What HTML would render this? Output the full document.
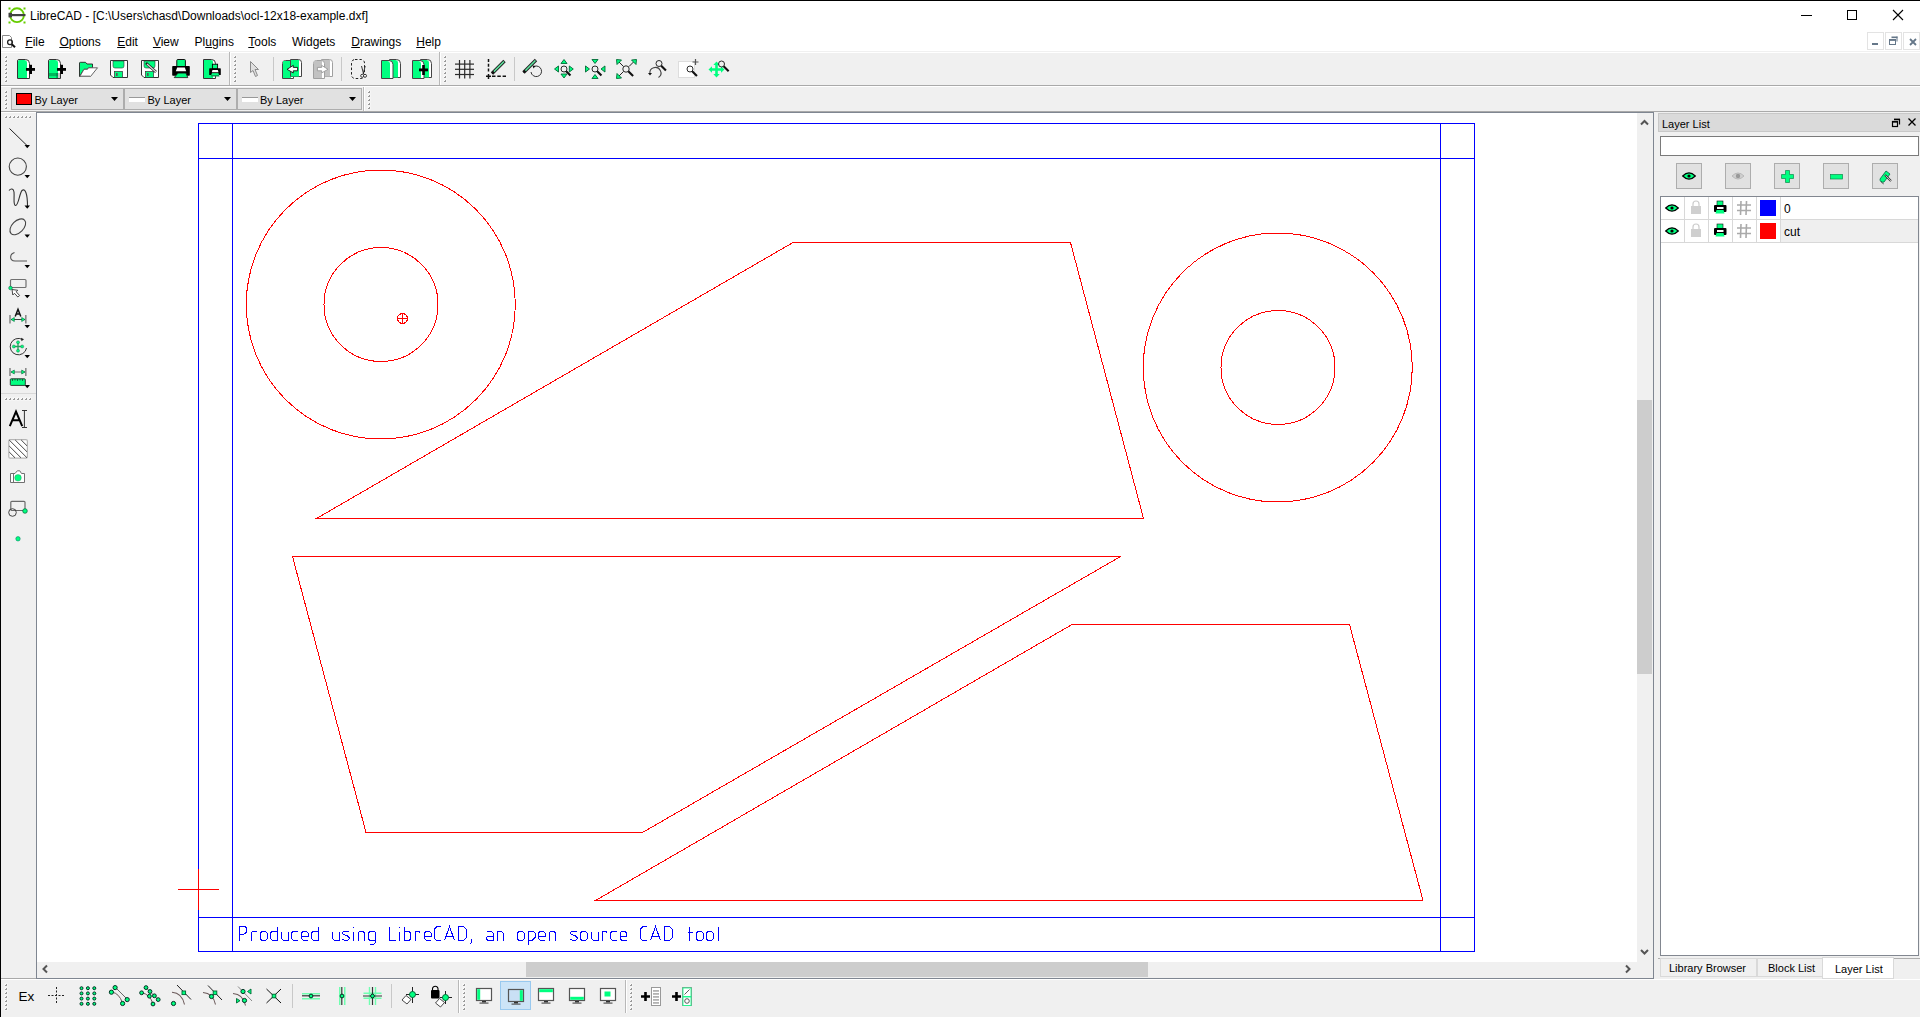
<!DOCTYPE html>
<html><head><meta charset="utf-8"><style>
html,body{margin:0;padding:0}
body{width:1920px;height:1017px;position:relative;overflow:hidden;background:#f0f0f0;font-family:"Liberation Sans",sans-serif}
.t{position:absolute;white-space:nowrap;line-height:1}
svg{overflow:visible}
</style></head><body>
<div style="position:absolute;left:0px;top:0px;width:1920px;height:53px;background:#fff"></div>
<div style="position:absolute;left:0px;top:51px;width:1920px;height:1px;background:#f0f0f0"></div>
<div style="position:absolute;left:0px;top:0px;width:1920px;height:1px;background:#000"></div>
<div style="position:absolute;left:0px;top:0px;width:1px;height:1017px;background:#000"></div>
<div style="position:absolute;left:1px;top:85px;width:1919px;height:1px;background:#a9a9a9"></div>
<div style="position:absolute;left:1px;top:86px;width:1919px;height:1px;background:#fff"></div>
<div style="position:absolute;left:1px;top:111px;width:1919px;height:1px;background:#a9a9a9"></div>
<div style="position:absolute;left:36px;top:112px;width:1618px;height:867px;background:#fff;border:1px solid #7f8691;box-sizing:border-box"></div>
<div style="position:absolute;left:1px;top:112px;width:35px;height:1px;background:#fff"></div>
<div style="position:absolute;left:1px;top:978px;width:35px;height:1px;background:#a9a9a9"></div>
<div style="position:absolute;left:1px;top:979px;width:1919px;height:1px;background:#fff"></div>
<div style="position:absolute;left:1637px;top:113px;width:16px;height:849px;background:#f0f0f0"></div>
<div style="position:absolute;left:1637px;top:400px;width:15px;height:274px;background:#cdcdcd"></div>
<div style="position:absolute;left:37px;top:962px;width:1616px;height:16px;background:#f0f0f0"></div>
<div style="position:absolute;left:526px;top:962px;width:622px;height:15px;background:#cdcdcd"></div>
<svg style="position:absolute;left:0;top:0" width="1920" height="1017"><g fill="none" stroke-width="1" shape-rendering="crispEdges"><rect x="198.5" y="123.5" width="1276" height="828" stroke="#0000ff"/><line x1="232.5" y1="123" x2="232.5" y2="952" stroke="#0000ff"/><line x1="1440.5" y1="123" x2="1440.5" y2="952" stroke="#0000ff"/><line x1="198" y1="158.5" x2="1475" y2="158.5" stroke="#0000ff"/><line x1="198" y1="917.5" x2="1475" y2="917.5" stroke="#0000ff"/><line x1="178" y1="889.5" x2="219" y2="889.5" stroke="#ff0000"/><line x1="198.5" y1="869" x2="198.5" y2="910" stroke="#ff0000"/></g><g fill="none" stroke="#0000ff" stroke-width="1" stroke-linejoin="miter" shape-rendering="crispEdges"><polyline points="239.5,940.5 239.5,926.5 245.0,926.5 246.5,928.0 246.5,932.0 245.0,933.5 242.5,934.5 239.5,934.5"/><polyline points="251.5,940.5 251.5,931.5"/><polyline points="251.5,931.5 256.0,931.5 256.5,932.5"/><polyline points="262.0,931.5 265.5,931.5 267.0,933.0 267.0,939.0 265.5,940.5 262.0,940.5 260.5,939.0 260.5,933.0 262.0,931.5"/><polyline points="277.0,926.5 277.0,940.5 272.5,940.5 270.5,938.5 270.5,933.0 272.0,931.5 277.0,931.5"/><polyline points="281.5,931.5 281.5,938.5 283.5,940.5 288.0,940.5"/><polyline points="288.0,931.5 288.0,940.5"/><polyline points="297.5,931.5 293.0,931.5 291.5,933.0 291.5,938.5 293.5,940.5 297.5,940.5"/><polyline points="301.5,936.0 308.0,936.0 308.0,933.0 306.5,931.5 303.0,931.5 301.5,933.0 301.5,938.5 303.5,940.5 308.0,940.5"/><polyline points="318.0,926.5 318.0,940.5 313.5,940.5 311.5,938.5 311.5,933.0 313.0,931.5 318.0,931.5"/><polyline points="332.5,931.5 332.5,938.5 334.5,940.5 339.0,940.5"/><polyline points="339.0,931.5 339.0,940.5"/><polyline points="349.0,931.5 343.5,931.5 342.5,932.5 343.0,934.0 348.5,936.5 349.0,937.5 349.0,939.0 347.5,940.5 344.5,940.5 342.5,939.0"/><polyline points="353.5,926.5 353.5,928.0"/><polyline points="353.5,931.5 353.5,940.5"/><polyline points="358.5,940.5 358.5,931.5"/><polyline points="358.5,931.5 363.0,931.5 364.5,933.0 364.5,940.5"/><polyline points="375.0,931.5 375.0,943.0 373.5,944.5 369.5,944.5"/><polyline points="375.0,931.5 370.0,931.5 368.5,933.0 368.5,939.0 370.0,940.5 375.0,940.5"/><polyline points="389.5,926.5 389.5,940.5 396.0,940.5"/><polyline points="399.5,926.5 399.5,928.0"/><polyline points="399.5,931.5 399.5,940.5"/><polyline points="404.5,926.5 404.5,940.5 409.0,940.5 410.5,939.0 410.5,933.0 409.0,931.5 404.5,931.5"/><polyline points="415.0,940.5 415.0,931.5"/><polyline points="415.0,931.5 419.5,931.5 420.0,932.5"/><polyline points="424.5,936.0 431.0,936.0 431.0,933.0 429.5,931.5 426.0,931.5 424.5,933.0 424.5,938.5 426.5,940.5 431.0,940.5"/><polyline points="441.0,926.5 437.0,926.5 434.5,929.0 434.5,938.5 436.5,940.5 441.0,940.5"/><polyline points="444.5,940.5 449.5,926.5 454.5,940.5"/><polyline points="446.3,936.0 452.7,936.0"/><polyline points="458.5,940.5 458.5,926.5 463.5,926.5 466.5,929.5 466.5,937.5 463.5,940.5 458.5,940.5"/><polyline points="471.5,938.5 471.5,941.5 470.5,944.0"/><polyline points="487.0,931.5 491.5,931.5 493.0,933.0 493.0,940.5"/><polyline points="493.0,936.0 488.5,936.0 486.5,937.5 486.5,939.0 488.0,940.5 493.0,940.5"/><polyline points="497.0,940.5 497.0,931.5"/><polyline points="497.0,931.5 501.5,931.5 503.0,933.0 503.0,940.5"/><polyline points="519.0,931.5 522.5,931.5 524.0,933.0 524.0,939.0 522.5,940.5 519.0,940.5 517.5,939.0 517.5,933.0 519.0,931.5"/><polyline points="528.5,945.0 528.5,931.5 533.5,931.5 535.0,933.0 535.0,937.5 532.5,940.0 528.5,940.0"/><polyline points="538.5,936.0 545.0,936.0 545.0,933.0 543.5,931.5 540.0,931.5 538.5,933.0 538.5,938.5 540.5,940.5 545.0,940.5"/><polyline points="549.5,940.5 549.5,931.5"/><polyline points="549.5,931.5 554.0,931.5 555.5,933.0 555.5,940.5"/><polyline points="577.0,931.5 571.5,931.5 570.5,932.5 571.0,934.0 576.5,936.5 577.0,937.5 577.0,939.0 575.5,940.5 572.5,940.5 570.5,939.0"/><polyline points="582.0,931.5 585.5,931.5 587.0,933.0 587.0,939.0 585.5,940.5 582.0,940.5 580.5,939.0 580.5,933.0 582.0,931.5"/><polyline points="591.5,931.5 591.5,938.5 593.5,940.5 598.0,940.5"/><polyline points="598.0,931.5 598.0,940.5"/><polyline points="602.0,940.5 602.0,931.5"/><polyline points="602.0,931.5 606.5,931.5 607.0,932.5"/><polyline points="616.5,931.5 612.0,931.5 610.5,933.0 610.5,938.5 612.5,940.5 616.5,940.5"/><polyline points="620.0,936.0 626.5,936.0 626.5,933.0 625.0,931.5 621.5,931.5 620.0,933.0 620.0,938.5 622.0,940.5 626.5,940.5"/><polyline points="647.0,926.5 643.0,926.5 640.5,929.0 640.5,938.5 642.5,940.5 647.0,940.5"/><polyline points="650.5,940.5 655.5,926.5 660.5,940.5"/><polyline points="652.3,936.0 658.7,936.0"/><polyline points="664.5,940.5 664.5,926.5 669.5,926.5 672.5,929.5 672.5,937.5 669.5,940.5 664.5,940.5"/><polyline points="689.0,926.5 689.0,940.5"/><polyline points="687.5,932.0 692.5,932.0"/><polyline points="698.0,931.5 701.5,931.5 703.0,933.0 703.0,939.0 701.5,940.5 698.0,940.5 696.5,939.0 696.5,933.0 698.0,931.5"/><polyline points="708.0,931.5 711.5,931.5 713.0,933.0 713.0,939.0 711.5,940.5 708.0,940.5 706.5,939.0 706.5,933.0 708.0,931.5"/><polyline points="718.0,926.5 718.0,940.5 719.0,940.5"/></g><g fill="none" stroke="#ff0000" stroke-width="1" shape-rendering="crispEdges"><circle cx="380.75" cy="304.5" r="134.5"/><circle cx="381" cy="304.5" r="57"/><circle cx="1277.75" cy="367.5" r="134.5"/><circle cx="1278" cy="367.5" r="57"/><circle cx="402.5" cy="318.5" r="5"/><line x1="397" y1="318.5" x2="408" y2="318.5"/><line x1="402.5" y1="313" x2="402.5" y2="324"/><polygon points="316.5,518.5 793,242.5 1070.5,242.5 1143.5,518.5"/><polygon points="292.5,556.5 1120.5,556.5 642.5,832.5 366,832.5"/><polygon points="1072,624.5 1349.5,624.5 1423,900.5 595.5,900.5"/></g></svg>
<div class="t" style="left:30px;top:9.64px;font-size:12px;color:#000;">LibreCAD - [C:\Users\chasd\Downloads\ocl-12x18-example.dxf]</div>
<svg style="position:absolute;left:8px;top:7px;" width="18" height="17" viewBox="0 0 18 17"><circle cx="9" cy="8.2" r="6.9" fill="none" stroke="#66cc00" stroke-width="1.9"/><rect x="0.5" y="0.5" width="2" height="2" fill="#66cc00"/><rect x="15.5" y="0.5" width="2" height="2" fill="#66cc00"/><rect x="0.5" y="14.5" width="2" height="2" fill="#66cc00"/><rect x="15.5" y="14.5" width="2" height="2" fill="#66cc00"/><rect x="1" y="7" width="16.5" height="2.2" fill="#404040"/><rect x="0.5" y="5.8" width="3.5" height="4.6" fill="#404040"/></svg>
<svg style="position:absolute;left:1801px;top:14px;" width="12" height="2" viewBox="0 0 12 2"><rect x="0" y="1" width="11" height="1" fill="#000"/></svg>
<svg style="position:absolute;left:1846px;top:9px;" width="12" height="12" viewBox="0 0 12 12"><rect x="1.5" y="1.5" width="9" height="9" fill="none" stroke="#000" stroke-width="1"/></svg>
<svg style="position:absolute;left:1892px;top:9px;" width="12" height="12" viewBox="0 0 12 12"><path d="M1 1 L11 11 M11 1 L1 11" stroke="#000" stroke-width="1.1" fill="none"/></svg>
<svg style="position:absolute;left:2px;top:35px;" width="15" height="13" viewBox="0 0 15 13"><path d="M0.5 0.5 L7.5 0.5 L9.5 2.5 L9.5 12.5 L0.5 12.5 Z" fill="#fff" stroke="#8a8a8a" stroke-width="1"/><circle cx="8" cy="7.3" r="2.4" fill="none" stroke="#222" stroke-width="1.3"/><path d="M9.8 9.2 L13 12.3" stroke="#111" stroke-width="2"/></svg>
<div class="t" style="left:25.3px;top:35.64px;font-size:12px;color:#000;text-decoration-skip-ink:none"><u>F</u>ile</div>
<div class="t" style="left:59.4px;top:35.64px;font-size:12px;color:#000;text-decoration-skip-ink:none"><u>O</u>ptions</div>
<div class="t" style="left:117.2px;top:35.64px;font-size:12px;color:#000;text-decoration-skip-ink:none"><u>E</u>dit</div>
<div class="t" style="left:152.9px;top:35.64px;font-size:12px;color:#000;text-decoration-skip-ink:none"><u>V</u>iew</div>
<div class="t" style="left:194.6px;top:35.64px;font-size:12px;color:#000;text-decoration-skip-ink:none">Pl<u>u</u>gins</div>
<div class="t" style="left:248.3px;top:35.64px;font-size:12px;color:#000;text-decoration-skip-ink:none"><u>T</u>ools</div>
<div class="t" style="left:292px;top:35.64px;font-size:12px;color:#000;text-decoration-skip-ink:none">Widgets</div>
<div class="t" style="left:351.25px;top:35.64px;font-size:12px;color:#000;text-decoration-skip-ink:none"><u>D</u>rawings</div>
<div class="t" style="left:416.25px;top:35.64px;font-size:12px;color:#000;text-decoration-skip-ink:none"><u>H</u>elp</div>
<div style="position:absolute;left:1867px;top:32px;width:17px;height:18px;border:1px solid #e3e3e3;box-sizing:border-box;background:#fff"></div>
<div style="position:absolute;left:1885px;top:32px;width:17px;height:18px;border:1px solid #e3e3e3;box-sizing:border-box;background:#fff"></div>
<div style="position:absolute;left:1903px;top:32px;width:17px;height:18px;border:1px solid #e3e3e3;box-sizing:border-box;background:#fff"></div>
<svg style="position:absolute;left:1872px;top:43px;" width="7" height="3" viewBox="0 0 7 3"><rect x="0" y="0" width="6" height="2" fill="#657789"/></svg>
<svg style="position:absolute;left:1889px;top:36px;" width="10" height="10" viewBox="0 0 10 10"><rect x="2.5" y="0.5" width="6" height="1.6" fill="#657789"/><rect x="7.5" y="0.5" width="1" height="5" fill="#657789"/><rect x="0.5" y="3.5" width="6" height="5" fill="none" stroke="#657789" stroke-width="1"/><rect x="0.5" y="3.3" width="6" height="1.6" fill="#657789"/></svg>
<svg style="position:absolute;left:1909px;top:38px;" width="8" height="8" viewBox="0 0 8 8"><path d="M1 1 L7 7 M7 1 L1 7" stroke="#657789" stroke-width="1.8" fill="none"/></svg>
<svg style="position:absolute;left:0;top:0" width="1920" height="1017"><rect x="4.5" y="55.5" width="3" height="3" fill="#fbfbfb"/><rect x="6" y="56.0" width="1" height="1" fill="#9a9a9a"/><rect x="5" y="57.0" width="2" height="1" fill="#9a9a9a"/><rect x="4.5" y="59.5" width="3" height="3" fill="#fbfbfb"/><rect x="6" y="60.0" width="1" height="1" fill="#9a9a9a"/><rect x="5" y="61.0" width="2" height="1" fill="#9a9a9a"/><rect x="4.5" y="63.5" width="3" height="3" fill="#fbfbfb"/><rect x="6" y="64.0" width="1" height="1" fill="#9a9a9a"/><rect x="5" y="65.0" width="2" height="1" fill="#9a9a9a"/><rect x="4.5" y="67.5" width="3" height="3" fill="#fbfbfb"/><rect x="6" y="68.0" width="1" height="1" fill="#9a9a9a"/><rect x="5" y="69.0" width="2" height="1" fill="#9a9a9a"/><rect x="4.5" y="71.5" width="3" height="3" fill="#fbfbfb"/><rect x="6" y="72.0" width="1" height="1" fill="#9a9a9a"/><rect x="5" y="73.0" width="2" height="1" fill="#9a9a9a"/><rect x="4.5" y="75.5" width="3" height="3" fill="#fbfbfb"/><rect x="6" y="76.0" width="1" height="1" fill="#9a9a9a"/><rect x="5" y="77.0" width="2" height="1" fill="#9a9a9a"/><rect x="4.5" y="79.5" width="3" height="3" fill="#fbfbfb"/><rect x="6" y="80.0" width="1" height="1" fill="#9a9a9a"/><rect x="5" y="81.0" width="2" height="1" fill="#9a9a9a"/><rect x="233.5" y="55.5" width="3" height="3" fill="#fbfbfb"/><rect x="235" y="56.0" width="1" height="1" fill="#9a9a9a"/><rect x="234" y="57.0" width="2" height="1" fill="#9a9a9a"/><rect x="233.5" y="59.5" width="3" height="3" fill="#fbfbfb"/><rect x="235" y="60.0" width="1" height="1" fill="#9a9a9a"/><rect x="234" y="61.0" width="2" height="1" fill="#9a9a9a"/><rect x="233.5" y="63.5" width="3" height="3" fill="#fbfbfb"/><rect x="235" y="64.0" width="1" height="1" fill="#9a9a9a"/><rect x="234" y="65.0" width="2" height="1" fill="#9a9a9a"/><rect x="233.5" y="67.5" width="3" height="3" fill="#fbfbfb"/><rect x="235" y="68.0" width="1" height="1" fill="#9a9a9a"/><rect x="234" y="69.0" width="2" height="1" fill="#9a9a9a"/><rect x="233.5" y="71.5" width="3" height="3" fill="#fbfbfb"/><rect x="235" y="72.0" width="1" height="1" fill="#9a9a9a"/><rect x="234" y="73.0" width="2" height="1" fill="#9a9a9a"/><rect x="233.5" y="75.5" width="3" height="3" fill="#fbfbfb"/><rect x="235" y="76.0" width="1" height="1" fill="#9a9a9a"/><rect x="234" y="77.0" width="2" height="1" fill="#9a9a9a"/><rect x="233.5" y="79.5" width="3" height="3" fill="#fbfbfb"/><rect x="235" y="80.0" width="1" height="1" fill="#9a9a9a"/><rect x="234" y="81.0" width="2" height="1" fill="#9a9a9a"/><rect x="443.5" y="55.5" width="3" height="3" fill="#fbfbfb"/><rect x="445" y="56.0" width="1" height="1" fill="#9a9a9a"/><rect x="444" y="57.0" width="2" height="1" fill="#9a9a9a"/><rect x="443.5" y="59.5" width="3" height="3" fill="#fbfbfb"/><rect x="445" y="60.0" width="1" height="1" fill="#9a9a9a"/><rect x="444" y="61.0" width="2" height="1" fill="#9a9a9a"/><rect x="443.5" y="63.5" width="3" height="3" fill="#fbfbfb"/><rect x="445" y="64.0" width="1" height="1" fill="#9a9a9a"/><rect x="444" y="65.0" width="2" height="1" fill="#9a9a9a"/><rect x="443.5" y="67.5" width="3" height="3" fill="#fbfbfb"/><rect x="445" y="68.0" width="1" height="1" fill="#9a9a9a"/><rect x="444" y="69.0" width="2" height="1" fill="#9a9a9a"/><rect x="443.5" y="71.5" width="3" height="3" fill="#fbfbfb"/><rect x="445" y="72.0" width="1" height="1" fill="#9a9a9a"/><rect x="444" y="73.0" width="2" height="1" fill="#9a9a9a"/><rect x="443.5" y="75.5" width="3" height="3" fill="#fbfbfb"/><rect x="445" y="76.0" width="1" height="1" fill="#9a9a9a"/><rect x="444" y="77.0" width="2" height="1" fill="#9a9a9a"/><rect x="443.5" y="79.5" width="3" height="3" fill="#fbfbfb"/><rect x="445" y="80.0" width="1" height="1" fill="#9a9a9a"/><rect x="444" y="81.0" width="2" height="1" fill="#9a9a9a"/><rect x="229" y="52" width="1" height="33" fill="#b8b8b8"/><rect x="230" y="52" width="1" height="33" fill="#fff"/><rect x="439" y="52" width="1" height="33" fill="#b8b8b8"/><rect x="440" y="52" width="1" height="33" fill="#fff"/><path d="M17.5 78.5 L17.5 61 Q17.5 59.5 19 59.5 L25.5 59.5 Q29.5 59.5 29.5 63.5 L29.5 78.5 Z" fill="#fff" stroke="#333"/><path d="M18 78 L18 61.5 Q18 60 19.5 60 L24 60 Q27 60 27 63 L27 78 Z" fill="#00ff80"/><rect x="26" y="68" width="9" height="2.8" fill="#000"/><rect x="29.4" y="64.8" width="2.6" height="9.2" fill="#000"/><path d="M48.5 78.5 L48.5 61 Q48.5 59.5 50 59.5 L56.5 59.5 Q60.5 59.5 60.5 63.5 L60.5 78.5 Z" fill="#fff" stroke="#333"/><path d="M49 78 L49 61.5 Q49 60 50.5 60 L55 60 Q58 60 58 63 L58 78 Z" fill="#00ff80"/><rect x="49" y="73" width="9" height="3.2" fill="#00b85c"/><rect x="56.6" y="73" width="0.9" height="5" fill="#064"/><rect x="58" y="73" width="2" height="5" fill="#c8c8c8"/><rect x="57" y="68" width="9" height="2.8" fill="#000"/><rect x="60.4" y="64.8" width="2.6" height="9.2" fill="#000"/><path d="M79.5 76.5 L79.5 63 Q79.5 62.3 80.5 62.3 L85.5 62.3 L87 64 L92.5 64 L92.5 67.8 L88.5 67.8 L87.5 69.3 L84 69.3 Z" fill="#00ff80" stroke="#222" stroke-width="0.9" stroke-linejoin="round"/><path d="M79.8 76.5 L84 69.3 L87.5 69.3 L88.5 67.8 L97.5 67.8 L90.5 76.5 Z" fill="#fff" stroke="#555" stroke-width="0.9" stroke-linejoin="round"/><path d="M80.5 76 L90 76" stroke="#999" stroke-width="1"/><path d="M110.5 60.5 L127.5 60.5 L127.5 77.5 L113 77.5 L110.5 75 Z" fill="#fff" stroke="#333"/><path d="M113 61 L124 61 L124 66 Q124 68 122 68 L115 68 Q113 68 113 66 Z" fill="#00ff80" stroke="#333" stroke-width="0.6"/><rect x="114.5" y="71.5" width="8" height="6" fill="#00ff80" stroke="#333" stroke-width="0.7"/><rect x="116" y="73" width="1.6" height="3" fill="#555"/><path d="M141.5 60.5 L158.5 60.5 L158.5 77.5 L144 77.5 L141.5 75 Z" fill="#fff" stroke="#333"/><path d="M144 61 L155 61 L155 66 Q155 68 153 68 L146 68 Q144 68 144 66 Z" fill="#00ff80" stroke="#333" stroke-width="0.6"/><rect x="145.5" y="71.5" width="8" height="6" fill="#00ff80" stroke="#333" stroke-width="0.7"/><rect x="147" y="73" width="1.6" height="3" fill="#555"/><path d="M146 63 L156 72" stroke="#222" stroke-width="2.6"/><path d="M147 64 L156 72" stroke="#ddd" stroke-width="1.2"/><rect x="176.8" y="59.5" width="8.6" height="7.5" rx="1" fill="#00ff80" stroke="#111" stroke-width="1"/><rect x="172.2" y="66" width="17.6" height="9.7" rx="0.8" fill="#000"/><path d="M177.2 67.6 L184.8 67.6 L186.2 71.2 L175.8 71.2 Z" fill="#fff"/><path d="M178 73.1 L186 73.1 L187.8 77.6 L174.2 77.6 Z" fill="#00ff80" stroke="#111" stroke-width="0.8" stroke-linejoin="round"/><path d="M203.5 78.5 L203.5 59.5 L211.5 59.5 Q215.5 59.5 215.5 63.5 L215.5 78.5 Z" fill="#fff" stroke="#333"/><path d="M204 78 L204 60 L211 60 Q213 60 213 62 L213 78 Z" fill="#00ff80"/><rect x="212.4" y="64.2" width="5.2" height="4.8" fill="#00ff80" stroke="#000" stroke-width="0.9"/><rect x="209.2" y="68.3" width="11.6" height="6.7" rx="0.6" fill="#000"/><path d="M212.5 70 L217.8 70 L218.5 72.2 L211.8 72.2 Z" fill="#fff"/><path d="M211.8 73.2 L218.5 73.2 L219.5 76.5 L210.8 76.5 Z" fill="#0c9a55"/><path d="M212 73.2 L218.3 73.2 L218.8 75 L211.5 75 Z" fill="#00ff80"/><path d="M250.5 61.5 L250.5 72.5 L253 70.5 L255.5 76.5 L257.5 75.5 L255 69.5 L258.5 69.5 Z" fill="#e0e0e0" stroke="#8a8a8a" stroke-width="1"/><rect x="273" y="57" width="1" height="24" fill="#c8c8c8"/><path d="M282.5 78.5 L282.5 63.5 Q282.5 60.5 285.5 60.5 L293.5 60.5 L293.5 78.5 Z" fill="#fff" stroke="#444"/><rect x="283" y="61" width="8" height="17" fill="#00ff80"/><path d="M290.5 76.5 L290.5 59.5 L298.5 59.5 Q301.5 59.5 301.5 62.5 L301.5 76.5 Z" fill="#fff" stroke="#444"/><rect x="291" y="60" width="8" height="16.5" fill="#00ff80"/><path d="M287 69.3 L293.3 65.4 L293.3 67.4 L297.6 67.4 L297.6 70.8 L293.3 70.8 L293.3 72.9 Z" fill="#fff" stroke="#111" stroke-width="0.9" stroke-linejoin="round"/><path d="M321.5 76.5 L321.5 59.5 L329.5 59.5 Q332.5 59.5 332.5 62.5 L332.5 76.5 Z" fill="#fff" stroke="#a0a0a0"/><rect x="322" y="60" width="8" height="16.5" fill="#c2c2c2"/><path d="M313.5 78.5 L313.5 63.5 Q313.5 60.5 316.5 60.5 L321.5 60.5 Q324.5 60.5 324.5 63.5 L324.5 78.5 Z" fill="#fff" stroke="#a0a0a0"/><rect x="314" y="61" width="8" height="17" fill="#c2c2c2"/><path d="M328 69.3 L321.7 65.4 L321.7 67.4 L317.4 67.4 L317.4 70.8 L321.7 70.8 L321.7 72.9 Z" fill="#fff" stroke="#999" stroke-width="0.9" stroke-linejoin="round"/><rect x="341" y="57" width="1" height="24" fill="#c8c8c8"/><rect x="351.5" y="59.5" width="13" height="19" rx="3.5" fill="none" stroke="#222" stroke-width="1" stroke-dasharray="2.5 2"/><path d="M361.5 66 L363.6 74 M365.2 66 L363.2 74" stroke="#222" stroke-width="0.9"/><circle cx="362.2" cy="75.8" r="1.5" fill="#fff" stroke="#222" stroke-width="0.9"/><circle cx="365" cy="75.8" r="1.5" fill="#fff" stroke="#222" stroke-width="0.9"/><path d="M389.5 77.5 L389.5 59.5 L396.5 59.5 Q400.5 59.5 400.5 63.5 L400.5 77.5 Z" fill="#fff" stroke="#444"/><path d="M390 77.5 L390 60 L395 60 Q398 60 398 63 L398 77.5 Z" fill="#00ff80"/><path d="M381.5 78.5 L381.5 60.5 L389.0 60.5 Q393.0 60.5 393.0 64.5 L393.0 78.5 Z" fill="#fff" stroke="#444"/><path d="M382 78 L382 61 L387 61 Q390 61 390 64 L390 78 Z" fill="#00ff80"/><path d="M420.5 77.5 L420.5 59.5 L427.5 59.5 Q431.5 59.5 431.5 63.5 L431.5 77.5 Z" fill="#fff" stroke="#444"/><path d="M421 77.5 L421 60 L426 60 Q429 60 429 63 L429 77.5 Z" fill="#00ff80"/><path d="M412.5 78.5 L412.5 60.5 L420.0 60.5 Q424.0 60.5 424.0 64.5 L424.0 78.5 Z" fill="#fff" stroke="#444"/><path d="M413 78 L413 61 L418 61 Q421 61 421 64 L421 78 Z" fill="#00ff80"/><rect x="419" y="68.5" width="9" height="2.8" fill="#000"/><rect x="422.2" y="65" width="2.6" height="10" fill="#000"/><rect x="458.9" y="60" width="1.2" height="18.5" fill="#2a2a2a"/><rect x="464.09999999999997" y="60" width="1.2" height="18.5" fill="#2a2a2a"/><rect x="469.29999999999995" y="60" width="1.2" height="18.5" fill="#2a2a2a"/><rect x="455" y="63.49999999999999" width="19" height="1.2" fill="#2a2a2a"/><rect x="455" y="68.7" width="19" height="1.2" fill="#2a2a2a"/><rect x="455" y="73.9" width="19" height="1.2" fill="#2a2a2a"/><path d="M488.5 59 L488.5 73" stroke="#111" stroke-width="1.5" stroke-dasharray="3 1.8"/><path d="M492 76.3 L506 76.3" stroke="#111" stroke-width="1.5" stroke-dasharray="3.5 1.8"/><path d="M486 76.3 L491 76.3 M488.5 74 L488.5 79" stroke="#111" stroke-width="1.5"/><path d="M492 73.5 L504.5 61" stroke="#222" stroke-width="3.3"/><path d="M493.7677669529664 71.73223304703363 L503.93431457505073 61.56568542494924" stroke="#5ee8a0" stroke-width="1.5"/><path d="M492 73.5 L493.7677669529664 71.73223304703363" stroke="#111" stroke-width="2"/><rect x="514" y="57" width="1" height="24" fill="#c8c8c8"/><path d="M523.5 72.5 L536 60" stroke="#222" stroke-width="3.3"/><path d="M525.2677669529663 70.73223304703363 L535.4343145750507 60.56568542494924" stroke="#5ee8a0" stroke-width="1.5"/><path d="M523.5 72.5 L525.2677669529663 70.73223304703363" stroke="#111" stroke-width="2"/><path d="M534 66.5 A5.3 5.3 0 1 1 531 72" fill="none" stroke="#333" stroke-width="1"/><path d="M532.5 65.5 L535.5 66 L533.5 68.5 Z" fill="#111"/><polygon points="560.96,63.484 567.04,63.484 564,59.516" fill="#00ff80" stroke="#063" stroke-width="0.9" stroke-linejoin="round"/><polygon points="560.96,74.016 567.04,74.016 564,77.984" fill="#00ff80" stroke="#063" stroke-width="0.9" stroke-linejoin="round"/><polygon points="558.484,65.96 558.484,72.04 554.516,69" fill="#00ff80" stroke="#063" stroke-width="0.9" stroke-linejoin="round"/><polygon points="569.3159999999999,65.96 569.3159999999999,72.04 573.284,69" fill="#00ff80" stroke="#063" stroke-width="0.9" stroke-linejoin="round"/><circle cx="564" cy="69" r="3" fill="none" stroke="#2a2a2a" stroke-width="1"/><path d="M566.16 71.16 L570.4599999999999 75.46" stroke="#111" stroke-width="2.1"/><polygon points="591.96,59.516 598.04,59.516 595,63.484" fill="#00ff80" stroke="#063" stroke-width="0.9" stroke-linejoin="round"/><polygon points="591.96,78.484 598.04,78.484 595,74.516" fill="#00ff80" stroke="#063" stroke-width="0.9" stroke-linejoin="round"/><polygon points="585.516,65.96 585.516,72.04 589.484,69" fill="#00ff80" stroke="#063" stroke-width="0.9" stroke-linejoin="round"/><polygon points="604.984,65.96 604.984,72.04 601.016,69" fill="#00ff80" stroke="#063" stroke-width="0.9" stroke-linejoin="round"/><circle cx="595" cy="69" r="3" fill="none" stroke="#2a2a2a" stroke-width="1"/><path d="M597.16 71.16 L601.4599999999999 75.46" stroke="#111" stroke-width="2.1"/><path d="M619 62 L623.5 66.5 M633.5 62 L629 66.5 M619 76 L623.5 71.5" stroke="#222" stroke-width="1"/><polygon points="616.5,59.5 621.5,60 617,64.5" fill="#00ff80" stroke="#063" stroke-width="0.9" stroke-linejoin="round"/><polygon points="636.5,59.5 631.5,60 636,64.5" fill="#00ff80" stroke="#063" stroke-width="0.9" stroke-linejoin="round"/><polygon points="616.5,78.5 621.5,78 617,73.5" fill="#00ff80" stroke="#063" stroke-width="0.9" stroke-linejoin="round"/><circle cx="626" cy="69" r="3.2" fill="none" stroke="#2a2a2a" stroke-width="1"/><path d="M628.304 71.304 L633.1039999999999 76.104" stroke="#111" stroke-width="2.1"/><circle cx="659" cy="63.5" r="3" fill="none" stroke="#2a2a2a" stroke-width="1"/><path d="M661.16 65.66 L665.9599999999999 70.46" stroke="#111" stroke-width="2.1"/><path d="M658.5 77.5 A5.5 5.5 0 1 0 650 74" fill="none" stroke="#444" stroke-width="1.1"/><polygon points="648,73 652,73 650,75.5" fill="#111"/><rect x="678.5" y="61.5" width="16" height="16" fill="#fff" stroke="#ddd"/><path d="M695.5 59 L695.5 65 M692.5 62 L698.5 62" stroke="#555" stroke-width="1.2"/><circle cx="690" cy="69" r="3" fill="none" stroke="#2a2a2a" stroke-width="1"/><path d="M692.16 71.16 L696.9599999999999 75.96" stroke="#111" stroke-width="2.1"/><path d="M716.5 64.5 L716.5 74.5 M711.5 69.5 L721.5 69.5" stroke="#00ff80" stroke-width="2.6"/><polygon points="716.5,61.5 713.3,65.0 719.7,65.0" fill="#00ff80"/><polygon points="716.5,77.5 713.3,74.0 719.7,74.0" fill="#00ff80"/><polygon points="708.5,69.5 712.0,66.3 712.0,72.7" fill="#00ff80"/><polygon points="724.5,69.5 721.0,66.3 721.0,72.7" fill="#00ff80"/><circle cx="721.5" cy="64" r="3" fill="none" stroke="#2a2a2a" stroke-width="1"/><path d="M723.66 66.16 L728.66 71.16" stroke="#111" stroke-width="2.1"/></svg>
<svg style="position:absolute;left:0;top:0" width="1920" height="1017"><rect x="4.5" y="115.5" width="3" height="3" fill="#fbfbfb"/><rect x="6.0" y="116" width="1" height="1" fill="#9a9a9a"/><rect x="5.0" y="117" width="2" height="1" fill="#9a9a9a"/><rect x="8.5" y="115.5" width="3" height="3" fill="#fbfbfb"/><rect x="10.0" y="116" width="1" height="1" fill="#9a9a9a"/><rect x="9.0" y="117" width="2" height="1" fill="#9a9a9a"/><rect x="12.5" y="115.5" width="3" height="3" fill="#fbfbfb"/><rect x="14.0" y="116" width="1" height="1" fill="#9a9a9a"/><rect x="13.0" y="117" width="2" height="1" fill="#9a9a9a"/><rect x="16.5" y="115.5" width="3" height="3" fill="#fbfbfb"/><rect x="18.0" y="116" width="1" height="1" fill="#9a9a9a"/><rect x="17.0" y="117" width="2" height="1" fill="#9a9a9a"/><rect x="20.5" y="115.5" width="3" height="3" fill="#fbfbfb"/><rect x="22.0" y="116" width="1" height="1" fill="#9a9a9a"/><rect x="21.0" y="117" width="2" height="1" fill="#9a9a9a"/><rect x="24.5" y="115.5" width="3" height="3" fill="#fbfbfb"/><rect x="26.0" y="116" width="1" height="1" fill="#9a9a9a"/><rect x="25.0" y="117" width="2" height="1" fill="#9a9a9a"/><rect x="28.5" y="115.5" width="3" height="3" fill="#fbfbfb"/><rect x="30.0" y="116" width="1" height="1" fill="#9a9a9a"/><rect x="29.0" y="117" width="2" height="1" fill="#9a9a9a"/><path d="M9.5 128.5 L27 145.5" stroke="#222" stroke-width="1"/><polygon points="24.5,145 30.0,145 27.25,148.3" fill="#000"/><circle cx="17.8" cy="166.6" r="8.6" fill="none" stroke="#444" stroke-width="1.1"/><polygon points="24.5,175 30.0,175 27.25,178.3" fill="#000"/><path d="M9 190.5 C11 188 13.5 188.5 14 192 C14.5 198 13 205 15.5 205.5 C18.5 206 19.5 193 22 190.5 C25 188 27.5 193 27.5 206" fill="none" stroke="#333" stroke-width="1.1"/><polygon points="24.5,205.5 30.0,205.5 27.25,208.8" fill="#000"/><ellipse cx="17.8" cy="226.8" rx="9.5" ry="5.8" transform="rotate(-45 17.8 226.8)" fill="none" stroke="#444" stroke-width="1.1"/><polygon points="24.5,234.5 30.0,234.5 27.25,237.8" fill="#000"/><path d="M14.5 252.5 C9.5 254 9 260.5 15 261 L27 261" fill="none" stroke="#555" stroke-width="1.1"/><polygon points="24.5,265 30.0,265 27.25,268.3" fill="#000"/><rect x="10.5" y="279.5" width="15.5" height="8" rx="1" fill="none" stroke="#707070" stroke-width="1.2"/><path d="M12 289.5 L12.8 295 L14.5 293.3 L17.8 297 L19.6 295.5 L16.2 291.8 L17.8 290.3 Z" fill="#fff" stroke="#333" stroke-width="0.9" stroke-linejoin="round"/><circle cx="10.5" cy="288" r="1.8" fill="#00ff80" stroke="#064" stroke-width="0.6"/><polygon points="24.5,295 30.0,295 27.25,298.3" fill="#000"/><path d="M15.2 316.5 L18 309.3 L20.8 316.5 M16.2 314 L19.8 314" fill="none" stroke="#111" stroke-width="1.5"/><path d="M10 315 L10 323.5 M25.8 315 L25.8 323.5" stroke="#8a8a8a" stroke-width="1.6"/><path d="M11 319.5 L25 319.5" stroke="#444" stroke-width="1"/><polygon points="11,319.5 14.3,317.5 14.3,321.5" fill="#00ff80" stroke="#063" stroke-width="0.6"/><polygon points="25,319.5 21.7,317.5 21.7,321.5" fill="#00ff80" stroke="#063" stroke-width="0.6"/><polygon points="24.5,325 30.0,325 27.25,328.3" fill="#000"/><path d="M22.5 339.5 A8.2 8.2 0 1 0 26.5 348" fill="none" stroke="#333" stroke-width="1"/><polygon points="21,337.8 24,339.2 21.5,341.2" fill="#222"/><path d="M18 343 L18 350 M14.5 346.5 L21.5 346.5" stroke="#2a9a60" stroke-width="1.3"/><circle cx="18" cy="342.3" r="1.5" fill="#00ff80" stroke="#1a7a4a" stroke-width="0.5"/><circle cx="18" cy="350.7" r="1.5" fill="#00ff80" stroke="#1a7a4a" stroke-width="0.5"/><circle cx="13.8" cy="346.5" r="1.5" fill="#00ff80" stroke="#1a7a4a" stroke-width="0.5"/><circle cx="22.2" cy="346.5" r="1.5" fill="#00ff80" stroke="#1a7a4a" stroke-width="0.5"/><polygon points="24.5,355 30.0,355 27.25,358.3" fill="#000"/><path d="M10 368 L10 376 M25.8 368 L25.8 376" stroke="#8a8a8a" stroke-width="1.6"/><path d="M11 372 L25 372" stroke="#888" stroke-width="1.2"/><polygon points="11,372 14.3,370 14.3,374" fill="#00ff80" stroke="#063" stroke-width="0.6"/><polygon points="25,372 21.7,370 21.7,374" fill="#00ff80" stroke="#063" stroke-width="0.6"/><rect x="10.3" y="378.8" width="15" height="6.6" rx="0.8" fill="#00ff80" stroke="#222" stroke-width="0.9"/><path d="M12.5 379 L12.5 381 M15 379 L15 380.5 M17.5 379 L17.5 381 M20 379 L20 380.5 M22.5 379 L22.5 381" stroke="#222" stroke-width="0.7"/><polygon points="24.5,385 30.0,385 27.25,388.3" fill="#000"/><rect x="1" y="393" width="35" height="1" fill="#d8d8d8"/><rect x="4.5" y="397.5" width="3" height="3" fill="#fbfbfb"/><rect x="6.0" y="398" width="1" height="1" fill="#9a9a9a"/><rect x="5.0" y="399" width="2" height="1" fill="#9a9a9a"/><rect x="8.5" y="397.5" width="3" height="3" fill="#fbfbfb"/><rect x="10.0" y="398" width="1" height="1" fill="#9a9a9a"/><rect x="9.0" y="399" width="2" height="1" fill="#9a9a9a"/><rect x="12.5" y="397.5" width="3" height="3" fill="#fbfbfb"/><rect x="14.0" y="398" width="1" height="1" fill="#9a9a9a"/><rect x="13.0" y="399" width="2" height="1" fill="#9a9a9a"/><rect x="16.5" y="397.5" width="3" height="3" fill="#fbfbfb"/><rect x="18.0" y="398" width="1" height="1" fill="#9a9a9a"/><rect x="17.0" y="399" width="2" height="1" fill="#9a9a9a"/><rect x="20.5" y="397.5" width="3" height="3" fill="#fbfbfb"/><rect x="22.0" y="398" width="1" height="1" fill="#9a9a9a"/><rect x="21.0" y="399" width="2" height="1" fill="#9a9a9a"/><rect x="24.5" y="397.5" width="3" height="3" fill="#fbfbfb"/><rect x="26.0" y="398" width="1" height="1" fill="#9a9a9a"/><rect x="25.0" y="399" width="2" height="1" fill="#9a9a9a"/><rect x="28.5" y="397.5" width="3" height="3" fill="#fbfbfb"/><rect x="30.0" y="398" width="1" height="1" fill="#9a9a9a"/><rect x="29.0" y="399" width="2" height="1" fill="#9a9a9a"/><path d="M9.8 426.2 L16 411.6 L22.2 426.2 M12.5 420.3 L19.5 420.3" fill="none" stroke="#000" stroke-width="2"/><path d="M22 410.5 L27 410.5 M24.4 410.5 L24.4 427.5 M22 427.5 L27 427.5" fill="none" stroke="#333" stroke-width="1"/><rect x="8.8" y="439.6" width="18.6" height="18.6" rx="1.5" fill="#fff" stroke="#b5b5b5" stroke-width="1.2"/><path d="M9.2 440 L27 457.8 M15.2 440 L27 451.8 M21.2 440 L27 445.8 M9.2 446 L21 457.8 M9.2 452 L15 457.8" stroke="#333" stroke-width="0.9"/><path d="M10.5 473.5 L15 473.5 L17.3 470.8 L19.8 470.8 L21.5 473.5 L24.5 473.5 L24.5 482.5 L10.5 482.5 Z" fill="#fff" stroke="#707070" stroke-width="1"/><path d="M13.5 473.5 L13.5 482.5" stroke="#707070" stroke-width="1"/><circle cx="18" cy="477.8" r="3.3" fill="#00ff80" stroke="#2a8a5a" stroke-width="0.4"/><rect x="10.8" y="501.3" width="14.2" height="9.2" rx="1" fill="none" stroke="#6a6a6a" stroke-width="1.2"/><circle cx="12.5" cy="512.5" r="3.8" fill="none" stroke="#333" stroke-width="0.9"/><circle cx="25" cy="511" r="2.3" fill="#00ff80" stroke="#063" stroke-width="0.7"/><circle cx="18" cy="538.8" r="2.2" fill="#00ff80" stroke="#086" stroke-width="0.6"/><rect x="4.5" y="90.5" width="3" height="3" fill="#fbfbfb"/><rect x="6" y="91.0" width="1" height="1" fill="#9a9a9a"/><rect x="5" y="92.0" width="2" height="1" fill="#9a9a9a"/><rect x="4.5" y="94.5" width="3" height="3" fill="#fbfbfb"/><rect x="6" y="95.0" width="1" height="1" fill="#9a9a9a"/><rect x="5" y="96.0" width="2" height="1" fill="#9a9a9a"/><rect x="4.5" y="98.5" width="3" height="3" fill="#fbfbfb"/><rect x="6" y="99.0" width="1" height="1" fill="#9a9a9a"/><rect x="5" y="100.0" width="2" height="1" fill="#9a9a9a"/><rect x="4.5" y="102.5" width="3" height="3" fill="#fbfbfb"/><rect x="6" y="103.0" width="1" height="1" fill="#9a9a9a"/><rect x="5" y="104.0" width="2" height="1" fill="#9a9a9a"/><rect x="4.5" y="106.5" width="3" height="3" fill="#fbfbfb"/><rect x="6" y="107.0" width="1" height="1" fill="#9a9a9a"/><rect x="5" y="108.0" width="2" height="1" fill="#9a9a9a"/><rect x="11.5" y="88.5" width="112" height="21" fill="#e1e1e1" stroke="#adadad"/><polygon points="111,97 118,97 114.5,101" fill="#000"/><rect x="124.5" y="88.5" width="112" height="21" fill="#e1e1e1" stroke="#adadad"/><polygon points="224,97 231,97 227.5,101" fill="#000"/><rect x="237.5" y="88.5" width="124" height="21" fill="#e1e1e1" stroke="#adadad"/><polygon points="349,97 356,97 352.5,101" fill="#000"/><rect x="16.5" y="93.5" width="15" height="11" fill="#f00" stroke="#000"/><rect x="129" y="97" width="16" height="5" fill="#fff"/><rect x="129" y="97" width="16" height="1" fill="#999"/><rect x="242" y="97" width="16" height="5" fill="#fff"/><rect x="242" y="97" width="16" height="1" fill="#999"/><rect x="363" y="87" width="1" height="24" fill="#b8b8b8"/><rect x="364" y="87" width="1" height="24" fill="#fff"/><rect x="367.5" y="90.5" width="3" height="3" fill="#fbfbfb"/><rect x="369" y="91.0" width="1" height="1" fill="#9a9a9a"/><rect x="368" y="92.0" width="2" height="1" fill="#9a9a9a"/><rect x="367.5" y="94.5" width="3" height="3" fill="#fbfbfb"/><rect x="369" y="95.0" width="1" height="1" fill="#9a9a9a"/><rect x="368" y="96.0" width="2" height="1" fill="#9a9a9a"/><rect x="367.5" y="98.5" width="3" height="3" fill="#fbfbfb"/><rect x="369" y="99.0" width="1" height="1" fill="#9a9a9a"/><rect x="368" y="100.0" width="2" height="1" fill="#9a9a9a"/><rect x="367.5" y="102.5" width="3" height="3" fill="#fbfbfb"/><rect x="369" y="103.0" width="1" height="1" fill="#9a9a9a"/><rect x="368" y="104.0" width="2" height="1" fill="#9a9a9a"/><rect x="367.5" y="106.5" width="3" height="3" fill="#fbfbfb"/><rect x="369" y="107.0" width="1" height="1" fill="#9a9a9a"/><rect x="368" y="108.0" width="2" height="1" fill="#9a9a9a"/><rect x="1658.5" y="113.5" width="262" height="18" fill="#dadada" stroke="#c8c8c8" stroke-width="1"/><rect x="1892.5" y="121.5" width="5" height="5" fill="none" stroke="#000" stroke-width="1.2"/><path d="M1894.5 119.5 L1899.5 119.5 L1899.5 124.5" fill="none" stroke="#000" stroke-width="1.2"/><rect x="1892" y="121" width="6" height="1.6" fill="#000"/><rect x="1894" y="118.6" width="6" height="1.6" fill="#000"/><path d="M1908.5 118.5 L1915.5 125.5 M1915.5 118.5 L1908.5 125.5" stroke="#000" stroke-width="1.3"/><rect x="1660.5" y="136.5" width="258" height="19" fill="#fff" stroke="#7a7a7a" stroke-width="1"/><rect x="1676.5" y="163.5" width="25" height="25" fill="#e1e1e1" stroke="#adadad" stroke-width="1"/><rect x="1725.5" y="163.5" width="25" height="25" fill="#e1e1e1" stroke="#adadad" stroke-width="1"/><rect x="1774.5" y="163.5" width="25" height="25" fill="#e1e1e1" stroke="#adadad" stroke-width="1"/><rect x="1823.5" y="163.5" width="25" height="25" fill="#e1e1e1" stroke="#adadad" stroke-width="1"/><rect x="1872.5" y="163.5" width="25" height="25" fill="#e1e1e1" stroke="#adadad" stroke-width="1"/><path d="M1682.7 176 Q1689 169.7 1695.3 176 Q1689 182.3 1682.7 176 Z" fill="#00ff80" stroke="#000" stroke-width="1.2"/><circle cx="1689" cy="176" r="1.6" fill="#000"/><path d="M1732 176 Q1738 170 1744 176 Q1738 182 1732 176 Z" fill="#d0d0d0" stroke="#b8b8b8" stroke-width="1"/><circle cx="1738" cy="176" r="2.2" fill="#999"/><path d="M1785.5 170.5 L1789.5 170.5 L1789.5 174.5 L1793.5 174.5 L1793.5 178.5 L1789.5 178.5 L1789.5 182.5 L1785.5 182.5 L1785.5 178.5 L1781.5 178.5 L1781.5 174.5 L1785.5 174.5 Z" fill="#00ff80" stroke="#0a8a4a" stroke-width="0.7"/><rect x="1830.5" y="174.5" width="12" height="4.5" fill="#00ff80" stroke="#0a8a4a" stroke-width="0.7"/><path d="M1880 179 L1886 171 L1890 174 L1884 182 Q1880 183 1880 179 Z" fill="#00ff80" stroke="#064" stroke-width="0.8"/><path d="M1885 175 L1891 181" stroke="#333" stroke-width="2"/><path d="M1885.5 175.5 L1891 181" stroke="#ddd" stroke-width="0.8"/><path d="M1881 181 Q1882 184 1884 184" fill="none" stroke="#333" stroke-width="0.6"/><rect x="1660.5" y="196.5" width="258" height="759" fill="#fff" stroke="#828790" stroke-width="1"/><rect x="1781" y="220" width="137" height="22" fill="#efefef"/><rect x="1684" y="197" width="1" height="46" fill="#d8d8d8"/><rect x="1708" y="197" width="1" height="46" fill="#d8d8d8"/><rect x="1732" y="197" width="1" height="46" fill="#d8d8d8"/><rect x="1756" y="197" width="1" height="46" fill="#d8d8d8"/><rect x="1780" y="197" width="1" height="46" fill="#d8d8d8"/><rect x="1661" y="219" width="257" height="1" fill="#d8d8d8"/><rect x="1661" y="242" width="257" height="1" fill="#d8d8d8"/><path d="M1665.7 208 Q1672 201.7 1678.3 208 Q1672 214.3 1665.7 208 Z" fill="#00ff80" stroke="#000" stroke-width="1.2"/><circle cx="1672" cy="208" r="1.6" fill="#000"/><path d="M1693 206 L1693 204 A3 3 0 0 1 1699 204 L1699 206" fill="none" stroke="#ccc" stroke-width="1.2"/><rect x="1691" y="206" width="10" height="8" fill="#cfcfcf"/><rect x="1717" y="201" width="6" height="4.5" fill="#00ff80" stroke="#111" stroke-width="0.6"/><rect x="1714" y="205" width="12.5" height="7" rx="1" fill="#000"/><rect x="1717" y="207" width="6.5" height="2" fill="#fff"/><path d="M1716.5 210 L1723.5 210 L1724.5 213.5 L1715.5 213.5 Z" fill="#00ff80"/><path d="M1741 201 L1740.5 215 M1746.5 201 L1746 215 M1737 205 L1751 205 M1737 210.5 L1751 210.5" stroke="#aaa" stroke-width="1.6"/><path d="M1665.7 231 Q1672 224.7 1678.3 231 Q1672 237.3 1665.7 231 Z" fill="#00ff80" stroke="#000" stroke-width="1.2"/><circle cx="1672" cy="231" r="1.6" fill="#000"/><path d="M1693 229 L1693 227 A3 3 0 0 1 1699 227 L1699 229" fill="none" stroke="#ccc" stroke-width="1.2"/><rect x="1691" y="229" width="10" height="8" fill="#cfcfcf"/><rect x="1717" y="224" width="6" height="4.5" fill="#00ff80" stroke="#111" stroke-width="0.6"/><rect x="1714" y="228" width="12.5" height="7" rx="1" fill="#000"/><rect x="1717" y="230" width="6.5" height="2" fill="#fff"/><path d="M1716.5 233 L1723.5 233 L1724.5 236.5 L1715.5 236.5 Z" fill="#00ff80"/><path d="M1741 224 L1740.5 238 M1746.5 224 L1746 238 M1737 228 L1751 228 M1737 233.5 L1751 233.5" stroke="#aaa" stroke-width="1.6"/><rect x="1760" y="200" width="16" height="16" fill="#0000ff"/><rect x="1760" y="223" width="16" height="16" fill="#ff0000"/><rect x="1658" y="958" width="262" height="1" fill="#adadad"/><rect x="1660.5" y="958.5" width="96" height="18" fill="#f0f0f0" stroke="#d9d9d9" stroke-width="1"/><rect x="1757.5" y="958.5" width="65" height="18" fill="#f0f0f0" stroke="#d9d9d9" stroke-width="1"/><rect x="1822.5" y="957.5" width="71" height="21" fill="#fff" stroke="#d9d9d9" stroke-width="1"/><path d="M1641 124.5 L1644.5 121 L1648 124.5" fill="none" stroke="#555" stroke-width="2"/><path d="M1641 950 L1644.5 953.5 L1648 950" fill="none" stroke="#555" stroke-width="2"/><path d="M47 965.5 L43.5 969 L47 972.5" fill="none" stroke="#555" stroke-width="2"/><path d="M1626 965.5 L1629.5 969 L1626 972.5" fill="none" stroke="#555" stroke-width="2"/></svg>
<div class="t" style="left:34.5px;top:95.19px;font-size:11px;color:#000;">By Layer</div>
<div class="t" style="left:147.5px;top:95.19px;font-size:11px;color:#000;">By Layer</div>
<div class="t" style="left:260px;top:95.19px;font-size:11px;color:#000;">By Layer</div>
<div class="t" style="left:1662px;top:118.69px;font-size:11px;color:#000;">Layer List</div>
<div class="t" style="left:1784px;top:203.04px;font-size:12px;color:#000;">0</div>
<div class="t" style="left:1784px;top:225.54px;font-size:12px;color:#000;">cut</div>
<div class="t" style="left:1669px;top:963.19px;font-size:11px;color:#000;">Library Browser</div>
<div class="t" style="left:1768px;top:963.19px;font-size:11px;color:#000;">Block List</div>
<div class="t" style="left:1835px;top:964.19px;font-size:11px;color:#000;">Layer List</div>
<svg style="position:absolute;left:0;top:0" width="1920" height="1017"><rect x="4.5" y="983.5" width="3" height="3" fill="#fbfbfb"/><rect x="6" y="984.0" width="1" height="1" fill="#9a9a9a"/><rect x="5" y="985.0" width="2" height="1" fill="#9a9a9a"/><rect x="4.5" y="987.5" width="3" height="3" fill="#fbfbfb"/><rect x="6" y="988.0" width="1" height="1" fill="#9a9a9a"/><rect x="5" y="989.0" width="2" height="1" fill="#9a9a9a"/><rect x="4.5" y="991.5" width="3" height="3" fill="#fbfbfb"/><rect x="6" y="992.0" width="1" height="1" fill="#9a9a9a"/><rect x="5" y="993.0" width="2" height="1" fill="#9a9a9a"/><rect x="4.5" y="995.5" width="3" height="3" fill="#fbfbfb"/><rect x="6" y="996.0" width="1" height="1" fill="#9a9a9a"/><rect x="5" y="997.0" width="2" height="1" fill="#9a9a9a"/><rect x="4.5" y="999.5" width="3" height="3" fill="#fbfbfb"/><rect x="6" y="1000.0" width="1" height="1" fill="#9a9a9a"/><rect x="5" y="1001.0" width="2" height="1" fill="#9a9a9a"/><rect x="4.5" y="1003.5" width="3" height="3" fill="#fbfbfb"/><rect x="6" y="1004.0" width="1" height="1" fill="#9a9a9a"/><rect x="5" y="1005.0" width="2" height="1" fill="#9a9a9a"/><rect x="4.5" y="1007.5" width="3" height="3" fill="#fbfbfb"/><rect x="6" y="1008.0" width="1" height="1" fill="#9a9a9a"/><rect x="5" y="1009.0" width="2" height="1" fill="#9a9a9a"/><rect x="462.5" y="983.5" width="3" height="3" fill="#fbfbfb"/><rect x="464" y="984.0" width="1" height="1" fill="#9a9a9a"/><rect x="463" y="985.0" width="2" height="1" fill="#9a9a9a"/><rect x="462.5" y="987.5" width="3" height="3" fill="#fbfbfb"/><rect x="464" y="988.0" width="1" height="1" fill="#9a9a9a"/><rect x="463" y="989.0" width="2" height="1" fill="#9a9a9a"/><rect x="462.5" y="991.5" width="3" height="3" fill="#fbfbfb"/><rect x="464" y="992.0" width="1" height="1" fill="#9a9a9a"/><rect x="463" y="993.0" width="2" height="1" fill="#9a9a9a"/><rect x="462.5" y="995.5" width="3" height="3" fill="#fbfbfb"/><rect x="464" y="996.0" width="1" height="1" fill="#9a9a9a"/><rect x="463" y="997.0" width="2" height="1" fill="#9a9a9a"/><rect x="462.5" y="999.5" width="3" height="3" fill="#fbfbfb"/><rect x="464" y="1000.0" width="1" height="1" fill="#9a9a9a"/><rect x="463" y="1001.0" width="2" height="1" fill="#9a9a9a"/><rect x="462.5" y="1003.5" width="3" height="3" fill="#fbfbfb"/><rect x="464" y="1004.0" width="1" height="1" fill="#9a9a9a"/><rect x="463" y="1005.0" width="2" height="1" fill="#9a9a9a"/><rect x="462.5" y="1007.5" width="3" height="3" fill="#fbfbfb"/><rect x="464" y="1008.0" width="1" height="1" fill="#9a9a9a"/><rect x="463" y="1009.0" width="2" height="1" fill="#9a9a9a"/><rect x="629.5" y="983.5" width="3" height="3" fill="#fbfbfb"/><rect x="631" y="984.0" width="1" height="1" fill="#9a9a9a"/><rect x="630" y="985.0" width="2" height="1" fill="#9a9a9a"/><rect x="629.5" y="987.5" width="3" height="3" fill="#fbfbfb"/><rect x="631" y="988.0" width="1" height="1" fill="#9a9a9a"/><rect x="630" y="989.0" width="2" height="1" fill="#9a9a9a"/><rect x="629.5" y="991.5" width="3" height="3" fill="#fbfbfb"/><rect x="631" y="992.0" width="1" height="1" fill="#9a9a9a"/><rect x="630" y="993.0" width="2" height="1" fill="#9a9a9a"/><rect x="629.5" y="995.5" width="3" height="3" fill="#fbfbfb"/><rect x="631" y="996.0" width="1" height="1" fill="#9a9a9a"/><rect x="630" y="997.0" width="2" height="1" fill="#9a9a9a"/><rect x="629.5" y="999.5" width="3" height="3" fill="#fbfbfb"/><rect x="631" y="1000.0" width="1" height="1" fill="#9a9a9a"/><rect x="630" y="1001.0" width="2" height="1" fill="#9a9a9a"/><rect x="629.5" y="1003.5" width="3" height="3" fill="#fbfbfb"/><rect x="631" y="1004.0" width="1" height="1" fill="#9a9a9a"/><rect x="630" y="1005.0" width="2" height="1" fill="#9a9a9a"/><rect x="629.5" y="1007.5" width="3" height="3" fill="#fbfbfb"/><rect x="631" y="1008.0" width="1" height="1" fill="#9a9a9a"/><rect x="630" y="1009.0" width="2" height="1" fill="#9a9a9a"/><rect x="458" y="980" width="1" height="33" fill="#b8b8b8"/><rect x="459" y="980" width="1" height="33" fill="#fff"/><rect x="625" y="980" width="1" height="33" fill="#b8b8b8"/><rect x="626" y="980" width="1" height="33" fill="#fff"/><path d="M56.5 987 L56.5 1004 M48 995.5 L65 995.5" stroke="#222" stroke-width="1" stroke-dasharray="2 1.5"/><circle cx="81.5" cy="988.2" r="1.5" fill="#00ff80" stroke="#032" stroke-width="1"/><circle cx="81.5" cy="993.4" r="1.5" fill="#00ff80" stroke="#032" stroke-width="1"/><circle cx="81.5" cy="998.6" r="1.5" fill="#00ff80" stroke="#032" stroke-width="1"/><circle cx="81.5" cy="1003.8" r="1.5" fill="#00ff80" stroke="#032" stroke-width="1"/><circle cx="87.9" cy="988.2" r="1.5" fill="#00ff80" stroke="#032" stroke-width="1"/><circle cx="87.9" cy="993.4" r="1.5" fill="#00ff80" stroke="#032" stroke-width="1"/><circle cx="87.9" cy="998.6" r="1.5" fill="#00ff80" stroke="#032" stroke-width="1"/><circle cx="87.9" cy="1003.8" r="1.5" fill="#00ff80" stroke="#032" stroke-width="1"/><circle cx="94.3" cy="988.2" r="1.5" fill="#00ff80" stroke="#032" stroke-width="1"/><circle cx="94.3" cy="993.4" r="1.5" fill="#00ff80" stroke="#032" stroke-width="1"/><circle cx="94.3" cy="998.6" r="1.5" fill="#00ff80" stroke="#032" stroke-width="1"/><circle cx="94.3" cy="1003.8" r="1.5" fill="#00ff80" stroke="#032" stroke-width="1"/><path d="M116 988 L126.5 998.5" stroke="#666" stroke-width="1"/><path d="M112 992.2 Q119 993 122.5 1003" fill="none" stroke="#6b5a5a" stroke-width="1"/><circle cx="115.1" cy="987.6" r="2.1" fill="#00ff80" stroke="#032" stroke-width="1"/><circle cx="111.4" cy="992.2" r="2.1" fill="#00ff80" stroke="#032" stroke-width="1"/><circle cx="127.2" cy="999.6" r="2.1" fill="#00ff80" stroke="#032" stroke-width="1"/><circle cx="122.6" cy="1003.5" r="2.1" fill="#00ff80" stroke="#032" stroke-width="1"/><path d="M146 987.6 L158 999.6" stroke="#666" stroke-width="1"/><path d="M141.6 992.8 Q150 994 153 1004" fill="none" stroke="#6b5a5a" stroke-width="1"/><circle cx="146" cy="987.6" r="1.9" fill="#00ff80" stroke="#032" stroke-width="1"/><circle cx="150" cy="991.5" r="1.9" fill="#00ff80" stroke="#032" stroke-width="1"/><circle cx="141.6" cy="992.8" r="1.9" fill="#00ff80" stroke="#032" stroke-width="1"/><circle cx="149.4" cy="996.2" r="1.9" fill="#00ff80" stroke="#032" stroke-width="1"/><circle cx="154.4" cy="995.8" r="1.9" fill="#00ff80" stroke="#032" stroke-width="1"/><circle cx="158.2" cy="999.6" r="1.9" fill="#00ff80" stroke="#032" stroke-width="1"/><circle cx="153" cy="1004" r="1.9" fill="#00ff80" stroke="#032" stroke-width="1"/><path d="M177 985 L191 999.5" stroke="#222" stroke-width="1"/><path d="M172 992.3 Q182 993 184.5 1004.5" fill="none" stroke="#6b5a5a" stroke-width="1.1"/><circle cx="173.5" cy="1003.5" r="2.1" fill="#00ff80" stroke="#032" stroke-width="1"/><rect x="182.0" y="991.0" width="3.6" height="3.6" fill="#00ff80" stroke="#063" stroke-width="0.9"/><path d="M208 985.5 L222 1000" stroke="#222" stroke-width="1"/><path d="M203 992.5 Q213 993 215.5 1004.5" fill="none" stroke="#6b5a5a" stroke-width="1.1"/><rect x="213.2" y="991.0" width="3.6" height="3.6" fill="#00ff80" stroke="#063" stroke-width="0.9"/><circle cx="211.5" cy="996.5" r="2.1" fill="#00ff80" stroke="#032" stroke-width="1"/><path d="M238 986.5 L252 1001" stroke="#888" stroke-width="1"/><path d="M233 993.5 Q243 994 245.5 1005.5" fill="none" stroke="#6b5a5a" stroke-width="1.1"/><circle cx="243" cy="991.5" r="2.1" fill="#00ff80" stroke="#032" stroke-width="1"/><circle cx="244.5" cy="1000.5" r="2.1" fill="#00ff80" stroke="#032" stroke-width="1"/><polygon points="251,989 251,994 247.5,991.5" fill="#00ff80" stroke="#063" stroke-width="0.9"/><polygon points="236.5,998.5 236.5,1003 240,1000.7" fill="#00ff80" stroke="#063" stroke-width="0.9"/><path d="M266.5 989 L281 1003 M281 989 L266.5 1003" stroke="#111" stroke-width="1"/><rect x="272.2" y="994.2" width="3.6" height="3.6" fill="#00ff80" stroke="#063" stroke-width="0.9"/><rect x="292" y="984" width="1" height="24" fill="#c8c8c8"/><rect x="302" y="993" width="18" height="1.5" fill="#6fffb0"/><rect x="302" y="998" width="18" height="1.5" fill="#6fffb0"/><path d="M302 995.8 L320 995.8" stroke="#333" stroke-width="1.2"/><circle cx="311" cy="996" r="1.9" fill="#00ff80" stroke="#032" stroke-width="1"/><rect x="339" y="987" width="1.5" height="18" fill="#6fffb0"/><rect x="344" y="987" width="1.5" height="18" fill="#6fffb0"/><path d="M341.8 987 L341.8 1005" stroke="#333" stroke-width="1.2"/><circle cx="342" cy="996" r="1.9" fill="#00ff80" stroke="#032" stroke-width="1"/><path d="M363.5 993.3 L381.5 993.3 M363.5 998.3 L381.5 998.3 M369.5 987 L369.5 1005 M375.5 987 L375.5 1005" stroke="#6fffb0" stroke-width="1.4"/><path d="M363 996 L382 996 M372.5 987 L372.5 1005" stroke="#333" stroke-width="1.2"/><circle cx="372.5" cy="996" r="1.9" fill="#00ff80" stroke="#032" stroke-width="1"/><rect x="391" y="984" width="1" height="24" fill="#c8c8c8"/><path d="M402 1000 L406 995.5 L411 999.5 L407 1004 Z" fill="#fff" stroke="#333" stroke-width="0.9"/><path d="M412.5 987 L412.5 1003 M406 994.5 L419 994.5" stroke="#222" stroke-width="1"/><circle cx="412.5" cy="994.5" r="3" fill="#00ff80" stroke="#063" stroke-width="1"/><rect x="431" y="990" width="8.5" height="8.5" rx="1" fill="#000"/><path d="M432.5 990.5 L432.5 988.5 A2.8 2.8 0 0 1 438 988.5 L438 990.5" fill="none" stroke="#000" stroke-width="1.1"/><path d="M435.5 1003 L439.5 998.5 L444.5 1002.5 L440.5 1007 Z" fill="#fff" stroke="#333" stroke-width="0.9"/><path d="M445.5 991 L445.5 1004 M440 997.5 L452 997.5" stroke="#222" stroke-width="1"/><circle cx="445.5" cy="997.5" r="3" fill="#00ff80" stroke="#063" stroke-width="1"/><rect x="500.5" y="981.5" width="30" height="28" fill="#cce4f7" stroke="#99c9ef" stroke-width="1"/><rect x="476.5" y="988.5" width="15" height="12" fill="#fff" stroke="#555" stroke-width="1.2"/><rect x="482" y="1001" width="4" height="1.5" fill="#333"/><rect x="479.5" y="1002.5" width="9" height="1.2" fill="#555"/><rect x="477.2" y="989.2" width="3" height="10.6" fill="#00ff80"/><rect x="508.5" y="989.5" width="15" height="12" fill="#c9e0f5" stroke="#555" stroke-width="1.2"/><rect x="514" y="1002" width="4" height="1.5" fill="#333"/><rect x="511.5" y="1003.5" width="9" height="1.2" fill="#555"/><rect x="519.8" y="990.2" width="3" height="10.6" fill="#00ff80"/><rect x="538.5" y="988.5" width="15" height="12" fill="#fff" stroke="#555" stroke-width="1.2"/><rect x="544" y="1001" width="4" height="1.5" fill="#333"/><rect x="541.5" y="1002.5" width="9" height="1.2" fill="#555"/><rect x="539.2" y="989.2" width="13.6" height="3" fill="#00ff80"/><rect x="569.5" y="988.5" width="15" height="12" fill="#fff" stroke="#555" stroke-width="1.2"/><rect x="575" y="1001" width="4" height="1.5" fill="#333"/><rect x="572.5" y="1002.5" width="9" height="1.2" fill="#555"/><rect x="570.2" y="996.8" width="13.6" height="3" fill="#00ff80"/><rect x="600.5" y="988.5" width="15" height="12" fill="#fff" stroke="#555" stroke-width="1.2"/><rect x="606" y="1001" width="4" height="1.5" fill="#333"/><rect x="603.5" y="1002.5" width="9" height="1.2" fill="#555"/><rect x="604.5" y="991.5" width="6" height="5" fill="#00ff80"/><path d="M641 996.5 L650 996.5 M645.5 992 L645.5 1001" stroke="#000" stroke-width="2.6"/><rect x="651.5" y="987.5" width="9" height="18" fill="#fff" stroke="#999" stroke-width="1"/><rect x="653" y="990.5" width="6" height="0.9" fill="#666"/><rect x="653" y="993.5" width="6" height="0.9" fill="#666"/><rect x="653" y="996.5" width="6" height="0.9" fill="#666"/><rect x="653" y="999.5" width="6" height="0.9" fill="#666"/><rect x="653" y="1002.5" width="6" height="0.9" fill="#666"/><path d="M672 996.5 L681 996.5 M676.5 992 L676.5 1001" stroke="#000" stroke-width="2.6"/><rect x="682.5" y="987.5" width="9" height="18" fill="#fff" stroke="#999" stroke-width="1"/><rect x="683" y="988" width="8" height="8.5" fill="#fff" stroke="#00ff80" stroke-width="0.8"/><rect x="683" y="997" width="8" height="8.5" fill="#fff" stroke="#00ff80" stroke-width="0.8"/><path d="M684.5 994.5 L689.5 989.5" stroke="#333" stroke-width="0.8"/><circle cx="687" cy="1001" r="2.3" fill="none" stroke="#333" stroke-width="0.8"/></svg>
<div class="t" style="left:18.5px;top:989.57px;font-size:13.5px;color:#000;">Ex</div>
<!--ICONS-->
</body></html>
